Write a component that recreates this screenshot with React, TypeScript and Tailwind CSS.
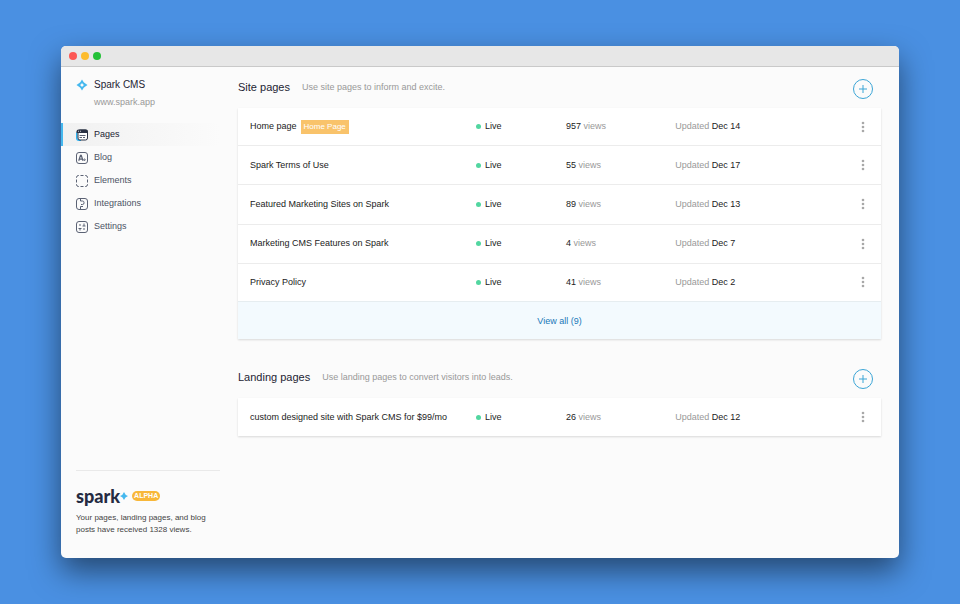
import React from 'react';
import clsx from 'clsx';

interface Page {
  name: string;
  views: number;
  updated: string;
  tag?: string;
}

interface PageSectionProps {
  title: string;
  description: string;
  pages: Page[];
  total?: number;
}

const sitePages: Page[] = [
  { name: 'Home page', views: 957, updated: 'Dec 14', tag: 'Home Page' },
  { name: 'Spark Terms of Use', views: 55, updated: 'Dec 17' },
  { name: 'Featured Marketing Sites on Spark', views: 89, updated: 'Dec 13' },
  { name: 'Marketing CMS Features on Spark', views: 4, updated: 'Dec 7' },
  { name: 'Privacy Policy', views: 41, updated: 'Dec 2' },
];

const landingPages: Page[] = [
  { name: 'custom designed site with Spark CMS for $99/mo', views: 26, updated: 'Dec 12' },
];

const PagesIcon = () => (
  <svg viewBox="0 0 24 24" fill="none" className="size-3 shrink-0">
    <path d="M1.5 7v11a4.500 4.500 0 0 0 4.500 4.500h4" stroke="#2cb1f0" strokeWidth="3" />
    <rect x="4" y="2" width="19" height="20" rx="4" fill="#fff" stroke="#2b3245" strokeWidth="2" />
    <path d="M1 8V5a4 4 0 0 1 4-4h15a4 4 0 0 1 4 4v3z" fill="#2b3245" />
    <path d="M4 4.5h2M8 4.5h2" stroke="#fff" strokeWidth="1.5" />
    <path d="M7 13h12M7 17h5M14 17h4" stroke="#5b6274" strokeWidth="2" />
  </svg>
);

const BlogIcon = () => (
  <svg viewBox="0 0 24 24" fill="none" stroke="#5b6274" strokeWidth="2" className="size-3 shrink-0">
    <rect x="1" y="1" width="22" height="22" rx="5" />
    <path d="M5.5 17.5 9 6.500h1.500l3.500 11M7 14h6" strokeWidth="2.5" />
    <circle cx="17" cy="15.5" r="1.500" />
  </svg>
);

const ElementsIcon = () => (
  <svg viewBox="0 0 24 24" fill="none" stroke="#5b6274" strokeWidth="2" className="size-3 shrink-0">
    <path d="M1 6V5a4 4 0 0 1 4-4h1M18 1h1a4 4 0 0 1 4 4v1M23 18v1a4 4 0 0 1-4 4h-1M6 23H5a4 4 0 0 1-4-4v-1" />
    <path d="M9 1h6M9 23h6M1 9v6M23 9v6" />
  </svg>
);

const IntegrationsIcon = () => (
  <svg viewBox="0 0 24 24" fill="none" stroke="#5b6274" strokeWidth="2" className="size-3 shrink-0">
    <rect x="1" y="1" width="22" height="22" rx="5" />
    <path d="M9 1v5h4a3 3 0 0 1 3 3v1a3 3 0 0 1-3 3h-3M9 23v-6h5" />
  </svg>
);

const SettingsIcon = () => (
  <svg viewBox="0 0 24 24" fill="none" stroke="#5b6274" strokeWidth="2" className="size-3 shrink-0">
    <rect x="1" y="1" width="22" height="22" rx="5" />
    <path d="M8 6v4M8 14v5M16 5v5M16 14v4M5 15h6M13 10h6" />
  </svg>
);

const navItems = [
  { label: 'Pages', icon: PagesIcon, active: true },
  { label: 'Blog', icon: BlogIcon },
  { label: 'Elements', icon: ElementsIcon },
  { label: 'Integrations', icon: IntegrationsIcon },
  { label: 'Settings', icon: SettingsIcon },
];

const Sidebar = () => (
  <aside className="flex w-[177px] shrink-0 flex-col pt-[10px] pb-[22px]">
    <div className="px-[15px]">
      <div className="flex h-4 items-center gap-[6px] text-[10px] leading-4 text-[#1d2433]">
        <svg viewBox="0 0 24 24" className="size-3 shrink-0" fill="#45b8ee">
          <path
            fillRule="evenodd"
            d="M12 1 15.500 6.500Q16.500 7.800 18 8.500L23 12 18 15.500Q16.500 16.200 15.500 17.500L12 23 8.500 17.500Q7.500 16.200 6 15.500L1 12 6 8.500Q7.500 7.800 8.500 6.500ZM12 8Q10.500 10.500 8 12 10.500 13.500 12 16 13.500 13.500 16 12 13.500 10.500 12 8Z"
          />
        </svg>
        <h1>Spark CMS</h1>
      </div>
      <p className="mt-px pl-[18px] text-[9px] leading-4 text-[#999]">www.spark.app</p>
    </div>

    <nav className="mt-[13px] mr-[18px]">
      {navItems.map(({ label, icon: Icon, active }) => (
        <a
          key={label}
          href="#"
          className={clsx(
            'flex h-[23px] items-center gap-[6px] border-l-2 pl-[13px] text-[9px] leading-[15px]',
            active
              ? 'border-[#45b8ee] bg-linear-to-r from-[#f1f1f1] to-[#fbfbfb] text-[#1d2433]'
              : 'border-transparent text-[#4c5365]'
          )}
        >
          <Icon />
          {label}
        </a>
      ))}
    </nav>

    {/* Footer */}
    <div className="mt-auto mr-[18px] ml-[15px] border-t border-[#e9e9e9] pt-[14px]">
      <div className="flex h-[22px] items-center">
        <span className="font-['Lato',sans-serif] text-[18px] leading-5 font-black text-[#252b42]">spark</span>
        <svg viewBox="0 0 16 16" className="size-2 shrink-0" fill="#45b8ee">
          <path d="M8 0Q10 6 16 8 10 10 8 16 6 10 0 8 6 6 8 0Z" />
        </svg>
        <span className="ml-1 rounded-full bg-[#f8b739] px-[2px] text-[7px] leading-[10px] font-bold text-white">
          ALPHA
        </span>
      </div>
      <p className="mt-[5px] text-[8px] leading-3 text-[#444]">
        Your pages, landing pages, and blog posts have received 1328 views.
      </p>
    </div>
  </aside>
);

const PageRow = ({ page }: { page: Page }) => (
  <tr className="border-t border-[#ececec] first:border-t-0">
    <td className="pl-3">
      <div className="flex items-center gap-1 whitespace-nowrap">
        {page.name}
        {page.tag && (
          <span className="bg-[#f9c36b] px-[3px] text-[8px] leading-[14px] text-white">{page.tag}</span>
        )}
      </div>
    </td>
    <td>
      <div className="flex items-center gap-1">
        <span className="size-[5px] rounded-full bg-[#52d6a0]" />
        Live
      </div>
    </td>
    <td>
      {page.views} <span className="text-[#999]">views</span>
    </td>
    <td>
      <span className="text-[#999]">Updated</span> {page.updated}
    </td>
    <td>
      <button aria-label={`Options for ${page.name}`} className="mx-auto flex">
        <svg viewBox="0 0 4 12" className="h-3 w-1" fill="#a8a8a8">
          <circle cx="2" cy="2" r="1.3" />
          <circle cx="2" cy="6" r="1.3" />
          <circle cx="2" cy="10" r="1.3" />
        </svg>
      </button>
    </td>
  </tr>
);

const PageSection = ({ title, description, pages, total }: PageSectionProps) => (
  <section>
    <header className="mb-[9px] flex h-5 items-start">
      <h2 className="text-[11px] leading-4 text-[#1d2433]">{title}</h2>
      <p className="ml-3 text-[9px] leading-4 text-[#999]">{description}</p>
      <button
        aria-label={`Add to ${title}`}
        className="mr-2 ml-auto flex size-5 items-center justify-center rounded-full border border-[#3ba5d6] text-[#3ba5d6]"
      >
        <svg viewBox="0 0 8 8" className="size-2" stroke="currentColor">
          <path d="M4 0v8M0 4h8" />
        </svg>
      </button>
    </header>
    <div className="bg-white shadow-[0_1px_2px_rgba(0,0,0,0.14)]">
      <table
        className={clsx(
          'w-full table-fixed border-collapse text-[9px] leading-[15px] text-[#222]',
          pages.length > 1 ? 'h-[193px]' : 'h-[38px]'
        )}
      >
        <colgroup>
          <col className="w-[37%]" />
          <col className="w-[14%]" />
          <col className="w-[17%]" />
          <col />
          <col className="w-9" />
        </colgroup>
        <tbody>
          {pages.map((page) => (
            <PageRow key={page.name} page={page} />
          ))}
        </tbody>
      </table>
      {total && (
        <a
          href="#"
          className="flex h-[38px] items-center justify-center border-t border-[#e6edf0] bg-[#f3fafe] text-[9px] leading-4 text-[#1878b8]"
        >
          View all ({total})
        </a>
      )}
    </div>
  </section>
);

const App = () => {
  return (
    <div className="flex min-h-screen flex-col bg-[#4a90e2] px-[61px] py-[46px] font-['Liberation_Sans',Arial,sans-serif]">
      <div className="flex flex-1 flex-col overflow-hidden rounded-[5px] bg-[#fbfbfb] shadow-[0_13px_30px_rgba(0,0,0,0.5)]">
        {/* Title bar */}
        <div className="flex h-[21px] items-center gap-1 border-b border-[#c9c9c9] bg-[#e7e7e7] px-2">
          <span className="size-2 rounded-full bg-[#fc5753]" />
          <span className="size-2 rounded-full bg-[#fdbc2e]" />
          <span className="size-2 rounded-full bg-[#24c138]" />
        </div>

        <div className="flex flex-1">
          <Sidebar />
          <main className="flex flex-1 flex-col gap-[30px] pt-3 pr-[18px]">
            <PageSection
              title="Site pages"
              description="Use site pages to inform and excite."
              pages={sitePages}
              total={9}
            />
            <PageSection
              title="Landing pages"
              description="Use landing pages to convert visitors into leads."
              pages={landingPages}
            />
          </main>
        </div>
      </div>
    </div>
  );
};

export default App;
